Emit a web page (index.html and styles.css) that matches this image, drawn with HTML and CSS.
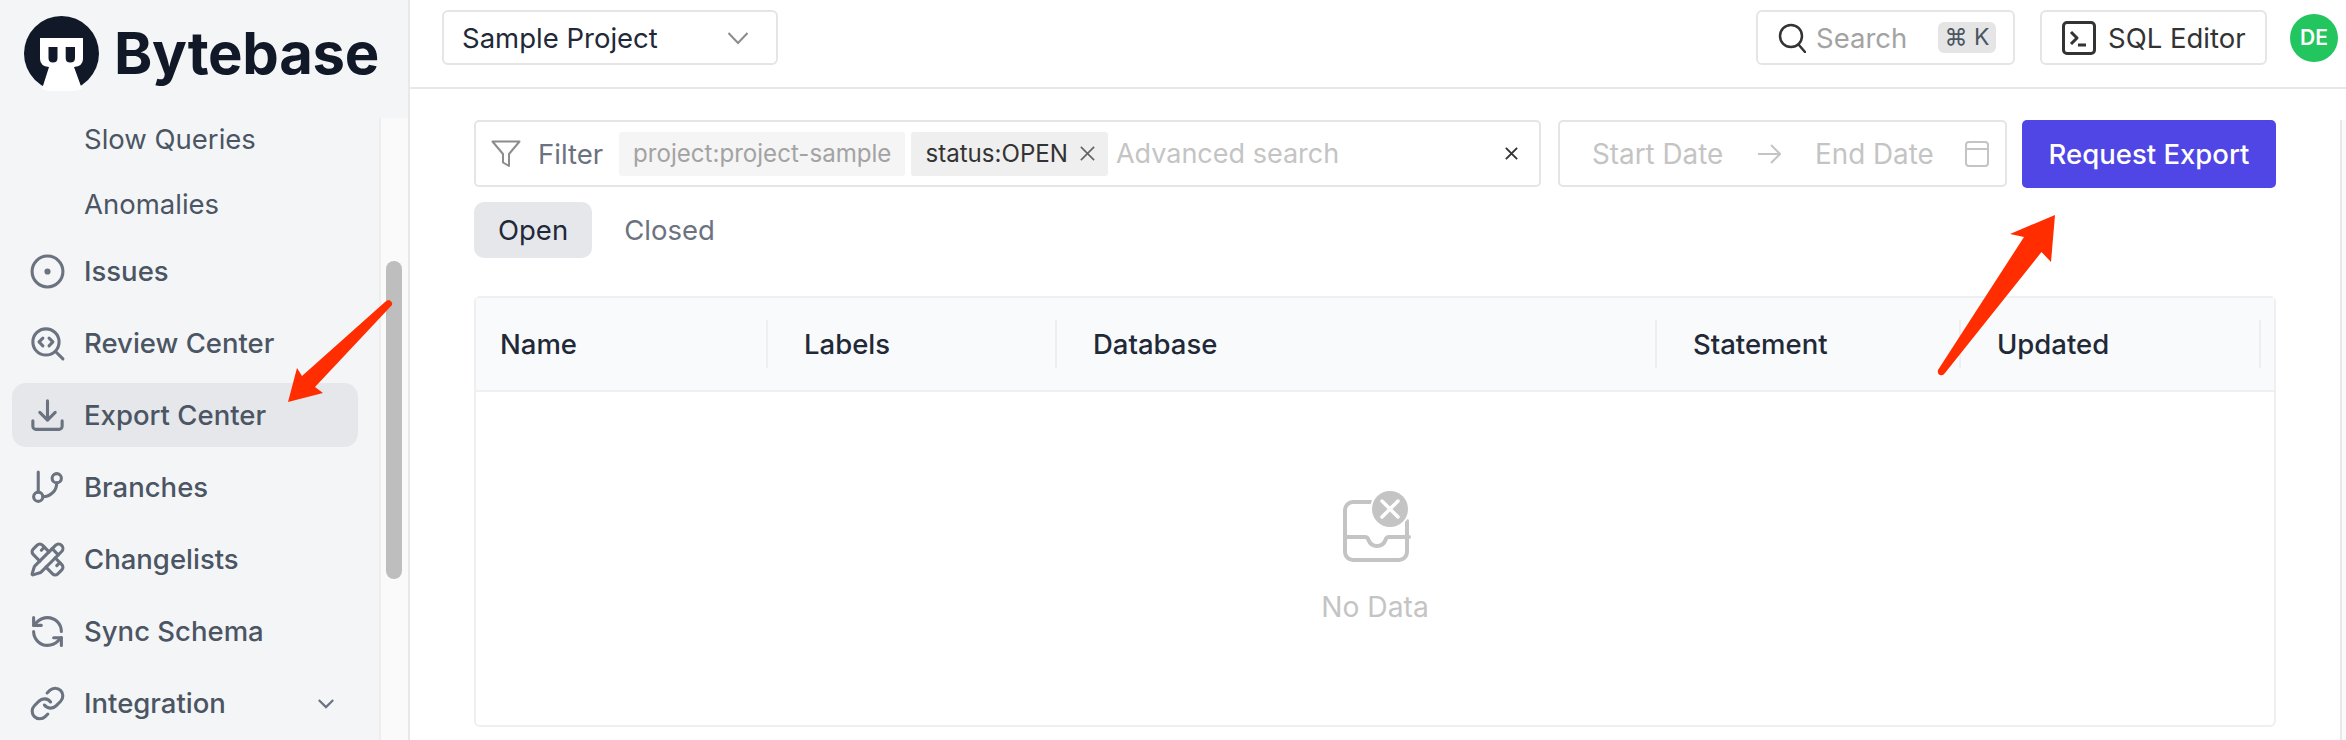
FILE: index.html
```html
<!DOCTYPE html>
<html lang="en">
<head>
<meta charset="utf-8">
<title>Bytebase Export Center</title>
<link rel="stylesheet" href="styles.css">
</head>
<body>
<div class="app">
  <aside class="sidebar">
    <div class="brand">
      <svg class="logo" viewBox="0 0 75 75"><circle cx="37.500" cy="37.500" r="37.500" fill="#111827"/><path d="M16 22H59V43Q59 50 50 51L58 73Q38 79 18 73L25 51Q16 50 16 43Z" fill="#fff"/><path d="M24.500 31H33.500V42Q33.500 46.500 29 46.500T24.500 42ZM41.700 31H51V42Q51 46.500 46.300 46.500T41.700 42Z" fill="#111827"/></svg>
      <span class="brand-name">Bytebase</span>
    </div>
    <div class="nav-area">
      <nav class="nav">
        <a class="sub">Slow Queries</a>
        <a class="sub sub-last">Anomalies</a>
        <a class="item"><svg class="ico" viewBox="0 0 24 24"><circle cx="12" cy="12" r="10"/><circle cx="12" cy="12" r="1" fill="currentColor"/></svg>Issues</a>
        <a class="item"><svg class="ico" viewBox="0 0 24 24"><circle cx="11" cy="11" r="8.500"/><path d="M17.200 17.200L22 22M9 8.500L6.500 11 9 13.500M13 8.500l2.500 2.500-2.500 2.500"/></svg>Review Center</a>
        <a class="item active"><svg class="ico" viewBox="0 0 24 24"><path d="M21.500 15.500v3.500a2 2 0 0 1-2 2h-15a2 2 0 0 1-2-2v-3.500M7 10l5 5 5-5M12 15V2.500"/></svg>Export Center</a>
        <a class="item"><svg class="ico" viewBox="0 0 24 24"><path d="M6 2v13M18 9a9 9 0 0 1-9 9"/><circle cx="18" cy="6" r="3"/><circle cx="6" cy="18" r="3"/></svg>Branches</a>
        <a class="item"><svg class="ico" viewBox="0 0 24 24"><path d="M13 7 8.700 2.700a2.410 2.410 0 0 0-3.400 0L2.700 5.300a2.410 2.410 0 0 0 0 3.400L7 13"/><path d="m8 6 2-2"/><path d="m18 16 2-2"/><path d="m17 11 4.300 4.300c.94.94.94 2.460 0 3.400l-2.600 2.600c-.94.94-2.460.94-3.400 0L11 17"/><path d="M21.174 6.812a1 1 0 0 0-3.986-3.987L3.842 16.174a2 2 0 0 0-.5.83l-1.321 4.352a.5.5 0 0 0 .623.622l4.353-1.320a2 2 0 0 0 .83-.497z"/><path d="m15 5 4 4"/></svg>Changelists</a>
        <a class="item"><svg class="ico" viewBox="0 0 24 24"><path d="M21 12a9 9 0 0 0-9-9 9.750 9.750 0 0 0-6.740 2.740L3 8"/><path d="M3 3v5h5"/><path d="M3 12a9 9 0 0 0 9 9 9.750 9.750 0 0 0 6.740-2.740L21 16"/><path d="M16 16h5v5"/></svg>Sync Schema</a>
        <a class="item"><svg class="ico" viewBox="0 0 24 24"><path d="M10 13a5 5 0 0 0 7.540.54l3-3a5 5 0 0 0-7.070-7.070l-1.720 1.710"/><path d="M14 11a5 5 0 0 0-7.540-.54l-3 3a5 5 0 0 0 7.070 7.070l1.710-1.710"/></svg><span class="grow">Integration</span><svg class="nav-chev" viewBox="0 0 20 12"><path d="M2 2l8 8 8-8"/></svg></a>
      </nav>
      <div class="track"><div class="thumb"></div></div>
    </div>
  </aside>
  <div class="main">
    <header class="topbar">
      <div class="select"><span>Sample Project</span><svg class="sel-chev" viewBox="0 0 22 14"><path d="M1.500 2l9.500 10 9.500-10"/></svg></div>
      <div class="search">
        <svg class="search-ico" viewBox="0 0 28 30"><circle cx="13" cy="13" r="11"/><path d="M20.500 21.500L27 29"/></svg>
        <span class="search-text">Search</span>
        <kbd class="kbd">⌘ K</kbd>
      </div>
      <div class="sql">
        <svg class="sql-ico" viewBox="0 0 34 34"><rect x="1.500" y="1.500" width="31" height="31" rx="3.500"/><path d="M9 11l6 6-6 6M16 24h8"/></svg>
        <span>SQL Editor</span>
      </div>
      <div class="avatar">DE</div>
    </header>
    <div class="body-row">
      <section class="content">
        <div class="filters">
          <div class="filter">
            <svg class="funnel" viewBox="0 0 30 28"><path d="M1.500 1.500h27L18 14v12l-6-3.500V14z"/></svg>
            <span class="filter-label">Filter</span>
            <span class="chip chip-off">project:project-sample</span>
            <span class="chip chip-on">status:OPEN<svg class="x" viewBox="0 0 18 18"><path d="M2 2l14 14M16 2L2 16"/></svg></span>
            <span class="placeholder grow">Advanced search</span>
            <svg class="clear" viewBox="0 0 16 16"><path d="M2 2l12 12M14 2L2 14"/></svg>
          </div>
          <div class="dates">
            <span class="placeholder start">Start Date</span>
            <svg class="arrow" viewBox="0 0 24 20"><path d="M1 10h22M14 1l9 9-9 9"/></svg>
            <span class="placeholder end">End Date</span>
            <svg class="cal" viewBox="0 0 24 26"><rect x="1" y="1" width="22" height="24" rx="3"/><path d="M1 8h22"/></svg>
          </div>
          <button class="primary" type="button">Request Export</button>
        </div>
        <div class="tabs">
          <span class="tab tab-on">Open</span>
          <span class="tab">Closed</span>
        </div>
        <div class="table">
          <div class="thead">
            <div class="th first"><span>Name</span></div>
            <div class="th"><span>Labels</span></div>
            <div class="th"><span>Database</span></div>
            <div class="th"><span>Statement</span></div>
            <div class="th"><span>Updated</span></div>
          </div>
          <div class="empty">
            <svg class="empty-ico" viewBox="0 0 68 72"><path class="tray" d="M38 11H10a8 8 0 0 0-8 8v42a8 8 0 0 0 8 8h46a8 8 0 0 0 8-8V30M2 46h20c2 0 3 1 3.500 3 1.500 4 4 6 8.500 6s7-2 8.500-6c.5-2 1.500-3 3.500-3h20"/><circle cx="47" cy="18" r="20" fill="#fff"/><circle cx="47" cy="18" r="18" fill="#c4c4c4"/><path class="cross" d="M39 10l16 16M55 10L39 26"/></svg>
            <span class="empty-text">No Data</span>
          </div>
        </div>
      </section>
      <div class="page-track"></div>
    </div>
  </div>
</div>
<svg class="annot" viewBox="0 0 2346 740">
  <path d="M392 305Q393 302 389 300Q387 300 385 302L302 376L297 368L288 402L323 393L315 387Z"/>
  <path d="M2055 215L2010 234L2024 237L1938 370Q1937 374 1940 375Q1943 376 1945 373L2041.500 252L2051 262Z"/>
</svg>
</body>
</html>
```
FILE: styles.css
```css
* { box-sizing: border-box; }
html, body { margin: 0; padding: 0; height: 740px; overflow: hidden; background: #fff; }
body { font-family: "Inter", "Liberation Sans", sans-serif; font-size: 27.500px; color: #1f2937; position: relative; }
.app { display: flex; width: 2346px; height: 740px; }
.grow { flex: 1; }

.sidebar { width: 410px; flex: none; background: #f4f5f7; border-right: 2px solid #e8e8e8; display: flex; flex-direction: column; }
.brand { height: 118px; flex: none; display: flex; align-items: flex-start; padding: 16px 0 0 24px; }
.logo { width: 75px; height: 75px; flex: none; }
.brand-name { margin: 2px 0 0 15px; font-size: 58px; line-height: 70px; font-weight: 700; color: #111827; letter-spacing: -0.3px; }
.nav-area { flex: 1; display: flex; min-height: 0; }
.nav { flex: 1; display: flex; flex-direction: column; padding-left: 12px; min-width: 0; }
.sub { height: 42px; line-height: 42px; margin-bottom: 23px; padding-left: 72px; color: #4b5563; }
.sub-last { margin-bottom: 14px; }
.item { width: 346px; height: 64px; flex: none; margin-bottom: 8px; display: flex; align-items: center; padding: 0 23px 0 17px; color: #4b5563; font-weight: 500; border-radius: 14px; }
.item.active { background: #e5e7eb; }
.ico { width: 37px; height: 37px; margin-right: 18px; flex: none; fill: none; stroke: #6b7280; color: #6b7280; stroke-width: 2; stroke-linecap: round; stroke-linejoin: round; }
.nav-chev { width: 18px; height: 11px; fill: none; stroke: #6b7280; stroke-width: 2.400; }
.track { width: 29px; flex: none; background: #fafafa; border-left: 2px solid #eeeeee; padding: 143px 0 0 5px; }
.thumb { width: 16px; height: 318px; border-radius: 8px; background: #bebebe; }

.main { flex: 1; min-width: 0; display: flex; flex-direction: column; }
.topbar { height: 89px; flex: none; border-bottom: 2px solid #e8e8e8; display: flex; align-items: flex-start; padding: 10px 0 0 32px; }
.select { width: 336px; height: 55px; border: 2px solid #e5e5e5; border-radius: 6px; display: flex; align-items: center; justify-content: space-between; padding: 0 27px 0 18px; }
.sel-chev { width: 22px; height: 14px; fill: none; stroke: #8c8c8c; stroke-width: 2; }
.search { width: 259px; height: 55px; margin-left: auto; border: 2px solid #e5e5e5; border-radius: 6px; display: flex; align-items: center; padding: 0 17px 0 20px; }
.search-ico { width: 28px; height: 30px; flex: none; fill: none; stroke: #333; stroke-width: 2.500; stroke-linecap: round; }
.search-text { flex: 1; margin-left: 10px; color: #a3a3a3; }
.kbd { width: 58px; height: 31px; border-radius: 6px; background: #e5e5e5; color: #4b5563; font-family: "Inter", "DejaVu Sans", sans-serif; font-size: 23px; line-height: 31px; text-align: center; }
.sql { width: 227px; height: 55px; margin-left: 25px; border: 2px solid #e5e5e5; border-radius: 6px; display: flex; align-items: center; padding-left: 20px; color: #333; }
.sql-ico { width: 34px; height: 34px; margin-right: 12px; flex: none; fill: none; stroke: #333; stroke-width: 3; stroke-linejoin: round; }
.avatar { width: 48px; height: 48px; margin: 4px 8px 0 23px; flex: none; border-radius: 50%; background: #22c55e; color: #fff; font-size: 21px; font-weight: 600; line-height: 48px; text-align: center; }

.body-row { flex: 1; display: flex; min-height: 0; }
.content { flex: 1; min-width: 0; padding: 31px 64px 0 64px; }
.page-track { width: 6px; flex: none; background: #fafafa; border-left: 2px solid #e8e8e8; margin-top: 31px; }
.filters { display: flex; height: 68px; }
.filter { flex: 1; min-width: 0; height: 67px; border: 2px solid #e5e5e5; border-radius: 5px; display: flex; align-items: center; padding: 0 20px 0 15px; }
.funnel { width: 30px; height: 28px; flex: none; fill: none; stroke: #8c8c8c; stroke-width: 2; stroke-linejoin: round; }
.filter-label { margin: 0 16px 0 17px; color: #6b7280; }
.chip { height: 44px; line-height: 44px; font-size: 24.100px; padding: 0 14px; border-radius: 3px; flex: none; display: flex; align-items: center; white-space: nowrap; }
.chip-off { background: #f5f5f5; color: #a3a3a3; margin-right: 6px; }
.chip-on { background: #efefef; color: #333; margin-right: 8px; padding-right: 12px; }
.x { width: 17px; height: 17px; margin-left: 11px; fill: none; stroke: #666; stroke-width: 1.800; }
.placeholder { color: #c4c4c4; }
.filter .placeholder { font-size: 27px; }
.clear { width: 15px; height: 15px; fill: none; stroke: #333; stroke-width: 2; }
.dates { width: 449px; height: 67px; flex: none; margin: 0 15px 0 17px; border: 2px solid #e5e5e5; border-radius: 5px; display: flex; align-items: center; padding: 0 16px 0 32px; font-size: 27.800px; }
.start { width: 165px; flex: none; }
.arrow { width: 24px; height: 20px; flex: none; fill: none; stroke: #c4c4c4; stroke-width: 2; }
.end { flex: 1; margin-left: 34px; }
.cal { width: 24px; height: 26px; flex: none; fill: none; stroke: #c4c4c4; stroke-width: 2; }
.primary { width: 254px; height: 68px; flex: none; border: 0; border-radius: 5px; background: #4f46e5; color: #fff; font: inherit; font-weight: 500; padding: 0; }
.tabs { display: flex; margin-top: 14px; gap: 8px; }
.tab { height: 56px; line-height: 56px; padding: 0 24px; border-radius: 10px; color: #6b7280; }
.tab-on { background: #e5e7eb; color: #1f2937; }
.table { margin-top: 38px; height: 431px; border: 2px solid #efeff2; border-radius: 6px; }
.thead { display: grid; grid-template-columns: 292px 289px 600px 304px 300px 1fr; height: 94px; background: #f9fafb; border-bottom: 2px solid #f0f0f3; }
.th { display: flex; align-items: center; justify-content: space-between; padding-left: 36px; font-weight: 500; color: #1f2937; }
.th.first { padding-left: 24px; }
.th::after { content: ""; width: 2px; height: 48px; background: #efeff2; }
.empty { display: flex; flex-direction: column; align-items: center; padding-top: 99px; }
.empty-ico { width: 68px; height: 72px; margin-left: 3px; fill: none; }
.tray { stroke: #c4c4c4; stroke-width: 4; stroke-linejoin: round; stroke-linecap: round; }
.cross { stroke: #fff; stroke-width: 3.500; stroke-linecap: round; }
.empty-text { margin-top: 28px; color: #c4c4c4; line-height: 32px; font-size: 28.200px; }

.annot { position: absolute; left: 0; top: 0; width: 2346px; height: 740px; pointer-events: none; }
.annot path { fill: #ff2d00; }
```
